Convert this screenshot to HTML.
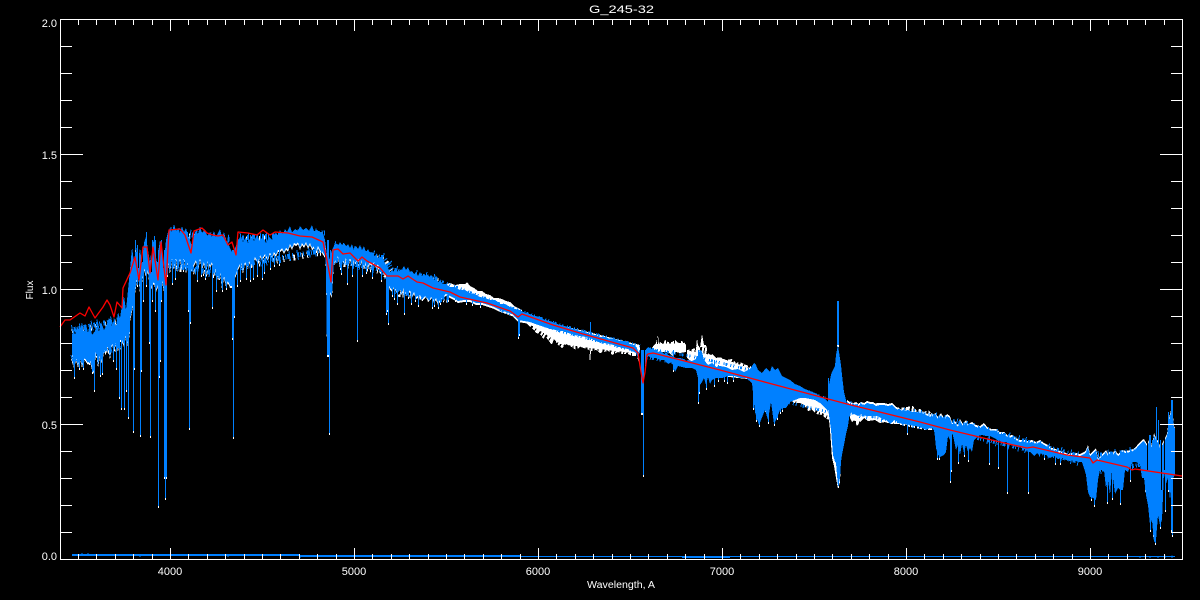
<!DOCTYPE html>
<html lang="en">
<head>
<meta charset="utf-8">
<title>G_245-32</title>
<style>
html,body{margin:0;padding:0;background:#000;}
svg{display:block;}
text{font-family:"Liberation Sans",sans-serif;fill:#fff;font-size:11px;}
</style>
</head>
<body>
<svg width="1200" height="600" viewBox="0 0 1200 600" xmlns="http://www.w3.org/2000/svg">
<defs>
<path id="bandL" d="M72,336L73,328 75,335 77,326 80,331 82,322 84,332 86,324 88,333 90,322 92,335 95,331 97,325 99,332 101,322 104,330 107,324 109,318 112,326 114,320 116,327 118,312 120,318 122,305 124,296 126,310 128,290 130,270 130,330 128,345 126,335 124,345 122,340 120,340 118,350 116,342 114,350 112,343 110,358 108,345 106,352 104,350 102,362 100,355 98,366 96,350 94,372 92,368 90,360 88,363 86,360 84,358 82,366 80,357 78,366 76,358 74,367 72,353Z
M130,270L132,247 134,262 136,246 138,262 140,248 142,265 144,243 146,237 148,250 150,262 152,245 154,240 156,262 158,253 160,240 162,248 164,262 166,240 168,232 168,275 166,275 164,290 162,280 160,270 158,285 156,290 154,282 152,285 150,290 148,270 146,275 144,268 142,282 140,292 138,272 136,285 134,300 132,310 130,320Z
M168,232L170,228 172,232 174,224 176,231 178,228 180,233 182,226 184,232 186,228 188,236 190,240 192,246 194,236 196,230 198,234 200,226 202,233 205,229 207,236 210,232 212,237 214,231 216,237 218,233 220,229 222,237 224,232 226,240 228,243 230,248 232,252 234,250 236,246 238,240 241,236 243,242 246,237 248,243 251,236 254,241 257,235 260,241 263,236 266,243 269,237 272,240 275,233 278,235 280,231 283,234 285,229 287,232 290,226 292,232 295,229 298,231 300,226 303,230 306,228 309,231 312,225 314,231 317,230 320,232 323,233 325,240 325,256 322,251 320,250 318,246 316,252 314,246 312,248 310,243 308,247 306,242 304,246 302,243 300,248 298,242 296,244 294,243 292,248 290,244 288,250 286,248 284,252 282,248 280,250 278,250 276,255 274,252 272,258 270,252 268,259 265,254 262,259 260,255 258,262 255,257 252,266 250,260 247,266 245,262 243,272 241,262 238,268 236,274 234,278 232,286 230,286 228,281 226,285 224,276 222,288 220,270 218,279 216,268 214,275 212,262 210,266 208,260 206,272 204,262 202,268 200,258 198,270 196,260 194,264 192,268 190,272 188,262 186,272 184,258 182,268 180,258 178,270 176,258 174,268 172,258 170,272 168,262Z
M325,240L327,255 329,260 332,250 334,246 334,258 332,296 330,292 329,355 327,355 326,272Z
M334,246L336,243 338,246 340,242 342,245 344,243 346,246 348,244 350,248 352,244 354,250 356,246 358,249 360,245 362,250 364,246 366,252 368,249 370,253 372,252 374,256 376,255 378,258 380,257 382,258 384,261 386,265 388,268 390,272 392,270 394,272 396,268 398,272 400,270 402,272 404,266 406,270 408,267 410,272 412,271 414,274 416,272 418,276 420,272 422,276 424,274 426,276 428,274 430,279 432,275 434,281 436,275 438,282 440,280 442,284 446,284 450,287 455,287 460,290 465,290 470,293 475,294 480,297 485,298 490,300 495,300 500,304 505,304 510,307 515,309 520,310 525,313 530,314 535,316 540,317 545,320 550,321 555,323 560,325 565,326 570,328 575,329 580,331 585,332 590,334 595,335 600,337 605,337 610,339 615,339 620,341 625,341 630,344 634,345 637,348 639,354 639,360 636,353 632,351 628,349 622,348 616,346 610,344 604,343 598,342 592,339 586,337 580,336 574,335 568,333 562,331 556,330 550,329 544,327 538,325 530,322 524,321 518,320 512,314 506,312 500,310 494,307 488,305 482,303 476,303 470,300 464,300 458,301 454,298 450,296 446,294 442,297 438,303 436,298 434,301 432,296 428,300 426,295 422,299 420,295 416,297 414,292 412,296 410,290 406,294 404,288 402,293 400,288 396,290 394,286 392,290 390,288 388,282 386,276 384,272 382,270 380,272 378,264 376,266 374,262 372,265 370,262 368,266 366,262 364,268 362,260 360,265 358,258 356,263 354,260 352,265 350,258 348,268 346,258 344,262 342,259 340,266 338,256 336,262 334,258Z"/>
<path id="linesL" d="M74 345V377M79 350V368M83 350V368M89 350V363M92 360V372M94 350V390M100 350V375M102 350V373M113 345V360M116 340V368M119 340V397M121 335V408M124 320V408M126 310V390M128 320V417M133 270V431M134 280V368M140 270V435M141 280V370M149 270V342M150 260V436M158 250V506M159 260V376M160 245V360M164 250V477M165 250V498M166 250V477
M131 262V300M135 240V250M137 245V285M143 250V300M146 232V285M152 240V300M155 240V310M161 240V300M154 236V250
M172 260V283M175 260V278M183 260V270M188 250V310M189 250V428M190 250V322M197 262V280M201 262V275M205 265V278M208 260V270M212 265V307M216 265V290M219 265V278M222 265V290M226 270V288M228 270V282M232 250V338M233 250V437M234 250V316M237 270V285M240 260V280M246 262V278M250 262V280M253 260V278M257 262V275M262 260V278M264 258V272M270 255V268M274 255V265M279 250V264
M327 240V355M328 240V355M329 260V433M330 250V290M331 255V294
M340 255V268M341 255V273M347 255V283M352 262V275M357 255V340M362 260V275M366 262V272M372 262V277M381 268V280M386 270V313M387 270V310M388 270V323M392 280V295M394 285V298M397 285V303M404 285V313M408 285V297M411 290V303M415 290V300M418 290V305M422 290V299M429 290V298M432 295V307M434 290V305M438 290V307M440 290V303M448 290V300M455 295V300M466 295V303M472 295V304M480 298V306M518 310V337M519 310V334M523 312V320M590 322V340
M641 350V413M642 350V413M643 350V475M645 350V365"/>
<path id="bandR" d="M847,402L850,404 853,405 856,404 858,406 861,404 864,405 867,403 870,404 873,404 876,406 880,405 884,405 888,406 892,405 896,409 900,410 904,411 908,410 912,412 916,412 920,413 924,414 928,416 932,417 934,414 936,416 938,419 941,415 944,420 947,416 950,418 952,424 955,423 958,427 960,421 963,426 966,422 968,426 972,424 976,427 980,428 984,425 988,430 992,431 996,431 1000,434 1004,434 1008,438 1012,437 1016,440 1020,442 1024,442 1028,443 1032,442 1036,444 1040,442 1044,445 1048,447 1052,450 1056,451 1060,453 1064,454 1068,456 1072,455 1076,455 1080,456 1084,454 1086,452 1088,447 1090,456 1093,453 1096,450 1098,460 1102,456 1104,454 1106,452 1108,456 1110,453 1112,456 1115,452 1118,456 1122,452 1126,453 1130,452 1133,451 1136,449 1138,446 1140,444 1142,442 1144,441 1147,446 1150,440 1152,448 1154,435 1156,440 1158,443 1160,448 1162,446 1165,440 1167,436 1169,420 1172,408 1174,428 1175,430 1175,475 1172,480 1170,500 1168,478 1166,484 1164,472 1162,520 1160,525 1158,515 1156,540 1154,542 1152,520 1150,525 1148,505 1146,495 1144,478 1142,478 1140,464 1136,462 1132,462 1128,472 1125,470 1123,490 1120,490 1118,488 1115,494 1112,470 1110,495 1108,480 1106,488 1104,470 1100,470 1098,480 1096,500 1093,498 1090,497 1088,492 1086,475 1084,468 1082,462 1078,462 1074,460 1070,461 1066,460 1062,458 1058,459 1054,456 1050,458 1046,455 1042,454 1038,452 1034,456 1030,452 1026,450 1022,448 1018,447 1014,446 1010,445 1006,442 1002,442 998,440 994,438 990,436 986,436 982,435 978,436 974,440 972,452 970,448 968,452 966,445 964,453 962,444 960,455 958,445 956,450 954,440 952,432 950,440 948,436 946,452 944,455 942,456 940,457 938,455 936,448 934,428 930,428 926,430 922,428 918,426 914,426 910,425 906,424 902,424 898,422 894,420 890,424 886,420 882,419 878,416 874,416 870,416 866,416 862,414 858,416 854,414 850,412 847,416Z"/>
<path id="linesR" d="M673 350V370M698 350V402M699 355V392M706 365V388M714 360V385M718 365V380M724 370V380M727 368V382M733 372V380M753 370V408M756 370V420M759 372V425M765 370V410M768 375V422M771 370V400M774 372V424M777 375V418M780 380V412M782 380V410M837 301V345M838 301V345M828 378V410M838 470V486
M907 420V433M937 428V458M939 425V458M950 425V481M951 425V470M958 440V462M964 435V455M968 430V460M989 430V463M998 435V467M1007 438V492M1028 445V492M1044 445V458M1055 450V463M1060 452V463M1091 455V499M1094 455V505M1107 470V502M1112 455V498M1115 460V490M1120 460V503M1130 460V480M1145 445V490M1149 435V470M1150 435V530M1152 440V520M1153 440V535M1155 440V543M1156 407V500M1158 420V500M1160 440V527M1162 445V500M1165 440V510M1168 412V490M1171 400V530M1172 400V535M1174 428V470"/>
<path id="edgeL" d="M72 330L118 320M170 232L230 240M240 238L325 233M334 246L384 258 392 270 440 280M72 360L120 345M170 265L226 275M240 265L325 250M334 260L384 270 400 292 450 298"/>
<path id="edgeR" d="M850 405L930 415 1000 434 1080 456M1098 455L1140 450M850 412L935 428 1080 462M1100 470L1140 465"/>
<path id="edgeQ" d="M440 281L500 304 560 325 640 346M500 310L560 331 640 352M650 349L700 358 750 370 825 398M650 358L750 378M786 402L828 412"/>
</defs>

<rect width="1200" height="600" fill="#000"/>

<!-- white trace -->
<g fill="#fff" shape-rendering="crispEdges">
<use href="#bandL" transform="translate(0,2)"/>
<g fill="none" stroke="#fff" stroke-width="1">
<use href="#linesL" transform="translate(0.5,2)"/>
<use href="#linesR" transform="translate(0.5,2)"/>
</g>
<use href="#edgeL" fill="none" stroke="#fff" stroke-width="6" stroke-dasharray="1 5 1 3 2 7 1 4 1 9 1 2 1 6" transform="translate(0,2)"/>
<use href="#bandR" transform="translate(0,-2)"/>
<path d="M445,284L450,283 455,285 460,284 465,284 467,282 470,286 474,288 478,291 482,291 486,294 490,295 494,298 498,298 502,299 506,301 510,302 514,306 518,308 522,310 522,315 500,306 470,298 445,292Z"/>
<path d="M520,315L640,345 640,352 636,356 632,356 628,354 622,354 618,352 612,355 608,351 604,352 600,353 596,350 591,351 590,363 589,350 584,348 580,347 576,350 570,346 566,344 562,348 558,345 554,339 552,345 548,340 546,337 544,340 540,334 536,333 532,328 528,325 524,320 520,318Z"/>
<path d="M652,348L654,345 656,343 658,335 659,345 660,342 663,344 665,340 668,342 672,342 675,340 678,343 681,341 684,342 686,345 686,352 680,353 676,352 672,356 668,352 664,352 660,352 656,353 652,352Z"/>
<path d="M687,350L692,349 696,348 697,338 698,345 700,348 702,334 704,345 706,345 708,352 710,355 712,354 716,358 720,357 726,360 732,359 736,363 740,362 746,365 750,366 754,369 756,372 756,380 720,376 700,370 687,358Z"/>
<path d="M780,385L830,405 832,420 826,419 822,415 816,414 812,410 808,411 804,405 800,403 794,403 790,400 784,403 780,396Z"/>
<path d="M850,405L880,403 900,408 913,406 916,410 920,409 924,412 928,410 932,414 936,418 936,430 925,430 915,428 905,426 897,424 890,424 885,422 880,423 875,420 868,421 864,418 860,422 857,426 854,420 852,422 850,418Z"/>
<path d="M828,410L846,410 846,432 843,446 841,460 840,482 838,489 836,478 834,466 832,458 830,430Z"/>
</g>
<!-- roughen the solid white edges -->
<g fill="none" stroke="#000" stroke-width="6" stroke-dasharray="2 3 1 4 2 2 1 2" shape-rendering="crispEdges">
<path d="M530 328L560 347 590 351 640 357"/>
<path d="M652 341L686 340M690 348L712 352 756 367"/>
<path d="M790 402L830 420M854 424L890 426 936 431M900 406L935 412"/>
</g>

<!-- blue trace -->
<g shape-rendering="crispEdges">
<use href="#bandL" fill="#0080ff"/>
<use href="#bandR" fill="#0080ff"/>
<path fill="#0080ff" d="M646,349L648,347 650,348 652,349 654,350 656,349 658,352 660,351 662,352 664,354 666,353 668,355 672,356 676,358 680,358 684,359 686,361 688,360 692,361 696,359 698,356 700,350 702,352 704,360 708,365 712,363 716,367 720,366 726,367 732,370 738,369 744,372 750,369 754,363 756,365 758,370 762,373 766,368 770,372 772,366 775,370 778,368 782,376 786,378 790,380 795,384 800,386 805,389 810,391 815,393 820,396 825,399 828,402 828,412 827,410 820,403 815,400 810,399 805,398 800,398 795,400 790,402 786,408 782,408 780,410 777,418 774,424 771,402 768,420 765,410 759,425 755,412 752,383 746,378 740,378 734,376 728,376 722,378 716,378 712,380 710,384 708,377 706,385 704,378 702,382 700,385 698,378 696,370 692,368 686,368 682,367 678,366 675,372 672,362 668,364 664,360 660,360 656,358 652,358 648,356 646,365Z"/>
<path fill="#0080ff" d="M828,408L829,385 831,375 832,372 834,368 835,366 836,355 838,345 839,352 841,365 842,375 844,392 847,404 850,412 848,426 846,434 844,445 842,455 841,462 840,478 838,487 837,475 836,463 835,462 834,458 833,455 831,430 829,415Z"/>
<g fill="none" stroke="#000" stroke-width="1">
<path d="M138.500 245V268M142.500 240V262M151.500 240V272M157.500 240V262M163.500 240V268M1164.500 436V470M1147.500 440V470M1161.500 442V490"/>
</g>
<g fill="none" stroke="#0080ff">
<use href="#edgeL" stroke-width="5" stroke-dasharray="1 1 2 3 1 2 1 1 3 2 1 4 2 1 1 2 1 3 2 2"/>
<use href="#edgeR" stroke-width="4" stroke-dasharray="1 1 2 3 1 2 1 1 3 2 1 4 2 1 1 2 1 3 2 2"/>
<use href="#edgeL" stroke-width="10" stroke-dasharray="1 7 1 11 1 5 1 13 1 9"/>
<use href="#edgeR" stroke-width="8" stroke-dasharray="1 9 1 6 1 14 1 8 1 12"/>
<use href="#edgeQ" stroke-width="3" stroke-dasharray="1 1 2 3 1 2 1 4"/>
</g>
<g fill="none" stroke="#0080ff" stroke-width="1">
<use href="#linesL" transform="translate(0.5,0)"/>
<use href="#linesR" transform="translate(0.5,0)"/>
<path stroke-width="2" d="M72 555H300M300 556H520"/>
<path d="M520 556.5H1175M82 553V555M88 553V555M140 556V557M228 556V557M300 556V558M682 557.5H730M740 556.5H760M820 556.5H840M930 556.5H946M1140 556.5V558M1150 556V558M1158 556V558M1165 555.500V558M1172 555.500V558"/>
</g>
</g>

<!-- red model -->
<polyline fill="none" stroke="#ff0000" stroke-width="1.3" stroke-linejoin="round" points="60,327 65,320 70,320 80,313 85,316 89,307 95,318 103,307 107,300 110,305 114,317 117,302 122,308 123,288 130,273 135,257 139,280 143,247 147,247 150,273 153,247 158,280 161,242 166,285 169,230 180,229 185,235 191,253 194,231 202,228 207,233 213,235 218,236 223,235 228,245 232,242 236,255 238,232 248,233 257,235 263,230 270,235 275,232 288,233 300,236 312,237 323,242 327,260 331,282 333,250 338,249 343,254 350,253 358,261 362,257 367,261 380,268 387,276 398,276 403,279 408,276 417,282 423,283 433,288 450,292 460,297 487,303 510,311 518,317 522,314 553,325 583,334 633,348 638,353 641,372 643,383 645,372 647,355 648,354 653,353 720,370 787,388 847,404 920,422 950,430 1000,442 1027,448 1033,447 1067,455 1090,458 1093,463 1097,460 1127,467 1132,470 1135,469 1182,476"/>

<!-- axes -->
<g fill="none" stroke="#fff" stroke-width="1" shape-rendering="crispEdges">
<rect x="60.5" y="19.5" width="1122" height="540"/>
<path d="M78.500 19V25M96.500 19V25M115.500 19V25M133.500 19V25M152.500 19V25M188.500 19V25M207.500 19V25M225.500 19V25M244.500 19V25M262.500 19V25M280.500 19V25M299.500 19V25M317.500 19V25M336.500 19V25M372.500 19V25M391.500 19V25M409.500 19V25M428.500 19V25M446.500 19V25M464.500 19V25M483.500 19V25M501.500 19V25M520.500 19V25M556.500 19V25M575.500 19V25M593.500 19V25M612.500 19V25M630.500 19V25M648.500 19V25M667.500 19V25M685.500 19V25M704.500 19V25M740.500 19V25M759.500 19V25M777.500 19V25M796.500 19V25M814.500 19V25M832.500 19V25M851.500 19V25M869.500 19V25M888.500 19V25M924.500 19V25M943.500 19V25M961.500 19V25M980.500 19V25M998.500 19V25M1016.500 19V25M1035.500 19V25M1053.500 19V25M1072.500 19V25M1108.500 19V25M1127.500 19V25M1145.500 19V25M1164.500 19V25"/>
<path d="M170.500 19V31M354.500 19V31M538.500 19V31M722.500 19V31M906.500 19V31M1090.500 19V31"/>
<path d="M78.500 559V554M96.500 559V554M115.500 559V554M133.500 559V554M152.500 559V554M188.500 559V554M207.500 559V554M225.500 559V554M244.500 559V554M262.500 559V554M280.500 559V554M299.500 559V554M317.500 559V554M336.500 559V554M372.500 559V554M391.500 559V554M409.500 559V554M428.500 559V554M446.500 559V554M464.500 559V554M483.500 559V554M501.500 559V554M520.500 559V554M556.500 559V554M575.500 559V554M593.500 559V554M612.500 559V554M630.500 559V554M648.500 559V554M667.500 559V554M685.500 559V554M704.500 559V554M740.500 559V554M759.500 559V554M777.500 559V554M796.500 559V554M814.500 559V554M832.500 559V554M851.500 559V554M869.500 559V554M888.500 559V554M924.500 559V554M943.500 559V554M961.500 559V554M980.500 559V554M998.500 559V554M1016.500 559V554M1035.500 559V554M1053.500 559V554M1072.500 559V554M1108.500 559V554M1127.500 559V554M1145.500 559V554M1164.500 559V554"/>
<path d="M170.500 559V548M354.500 559V548M538.500 559V548M722.500 559V548M906.500 559V548M1090.500 559V548"/>
<path d="M60 46.500H72M60 73.500H72M60 100.500H72M60 127.500H72M60 181.500H72M60 208.500H72M60 235.500H72M60 262.500H72M60 316.500H72M60 343.500H72M60 370.500H72M60 397.500H72M60 451.500H72M60 478.500H72M60 505.500H72M60 532.500H72"/>
<path d="M60 154.500H83M60 289.500H83M60 424.500H83"/>
<path d="M1182 46.500H1171M1182 73.500H1171M1182 100.500H1171M1182 127.500H1171M1182 181.500H1171M1182 208.500H1171M1182 235.500H1171M1182 262.500H1171M1182 316.500H1171M1182 343.500H1171M1182 370.500H1171M1182 397.500H1171M1182 451.500H1171M1182 478.500H1171M1182 505.500H1171M1182 532.500H1171"/>
<path d="M1182 154.500H1160M1182 289.500H1160M1182 424.500H1160"/>
</g>

<!-- labels -->
<text x="589" y="13" textLength="65" lengthAdjust="spacingAndGlyphs" font-size="11">G_245-32</text>
<text x="57" y="27" text-anchor="end">2.0</text>
<text x="57" y="159" text-anchor="end">1.5</text>
<text x="57" y="294" text-anchor="end">1.0</text>
<text x="57" y="429" text-anchor="end">0.5</text>
<text x="57" y="560" text-anchor="end">0.0</text>
<text x="170" y="575" text-anchor="middle">4000</text>
<text x="354" y="575" text-anchor="middle">5000</text>
<text x="538" y="575" text-anchor="middle">6000</text>
<text x="722" y="575" text-anchor="middle">7000</text>
<text x="906" y="575" text-anchor="middle">8000</text>
<text x="1090" y="575" text-anchor="middle">9000</text>
<text x="587" y="588" textLength="68" lengthAdjust="spacingAndGlyphs" style="font-size:10px">Wavelength, A</text>
<text transform="translate(33,299.500) rotate(-90)" textLength="19" lengthAdjust="spacingAndGlyphs" style="font-size:10px">Flux</text>
</svg>
</body>
</html>
